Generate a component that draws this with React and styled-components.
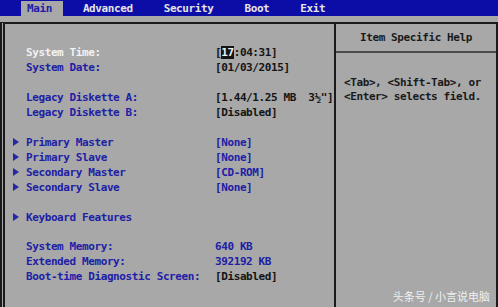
import React from 'react';
import styled, { createGlobalStyle } from 'styled-components';

const LINE = 14.93;

const GlobalStyle = createGlobalStyle`
  html, body {
    margin: 0;
    padding: 0;
    background: #a8a8a8;
  }
  body {
    width: 498px;
    height: 307px;
    overflow: hidden;
  }
`;

const tabs = ['Main', 'Advanced', 'Security', 'Boot', 'Exit'];

const groups = [
  [
    { label: 'System Time:', time: true, selected: true },
    { label: 'System Date:', value: '[01/03/2015]' },
  ],
  [
    { label: 'Legacy Diskette A:', value: '[1.44/1.25 MB  3½"]' },
    { label: 'Legacy Diskette B:', value: '[Disabled]' },
  ],
  [
    { label: 'Primary Master', value: '[None]', sub: true, blue: true },
    { label: 'Primary Slave', value: '[None]', sub: true, blue: true },
    { label: 'Secondary Master', value: '[CD-ROM]', sub: true, blue: true },
    { label: 'Secondary Slave', value: '[None]', sub: true, blue: true },
  ],
  [{ label: 'Keyboard Features', sub: true }],
  [
    { label: 'System Memory:', value: '640 KB', blue: true },
    { label: 'Extended Memory:', value: '392192 KB', blue: true },
    { label: 'Boot-time Diagnostic Screen:', value: '[Disabled]' },
  ],
];

const Arrow = () => (
  <svg width="6" height="8" viewBox="0 0 6 8">
    <path d="M0 0 L6 4 L0 8 Z" fill="#2626a8" />
  </svg>
);

const App = () => {
  return (
    <Screen>
      <GlobalStyle />
      <MenuBar>
        {tabs.map((tab) => (
          <Tab key={tab} active={tab === 'Main'}>
            {tab}
          </Tab>
        ))}
      </MenuBar>

      <Body>
        <Frame>
          <SetupPane>
            {groups.map((group, i) => (
              <Group key={i}>
                {group.map((row) => (
                  <Row key={row.label}>
                    <Marker>{row.sub && <Arrow />}</Marker>
                    <Label selected={row.selected}>{row.label}</Label>
                    {row.time ? (
                      <Value>
                        [<Cursor>17</Cursor>:04:31]
                      </Value>
                    ) : (
                      row.value && <Value blue={row.blue}>{row.value}</Value>
                    )}
                  </Row>
                ))}
              </Group>
            ))}
          </SetupPane>

          <HelpPane>
            <HelpTitle>Item Specific Help</HelpTitle>
            <HelpText>
              <HelpLine>&lt;Tab&gt;, &lt;Shift-Tab&gt;, or</HelpLine>
              <HelpLine>&lt;Enter&gt; selects field.</HelpLine>
            </HelpText>
          </HelpPane>
        </Frame>
      </Body>

      <Watermark>头条号 / 小言说电脑</Watermark>
    </Screen>
  );
};

const Screen = styled.div`
  position: relative;
  width: 498px;
  height: 307px;
  display: flex;
  flex-direction: column;
  background: #a8a8a8;
  font-family: "DejaVu Sans Mono", "Liberation Mono", monospace;
  font-size: 11px;
  font-weight: 700;
  letter-spacing: -0.4px;
  overflow: hidden;
`;

const MenuBar = styled.div`
  height: 16px;
  display: flex;
  align-items: stretch;
  gap: 19px;
  padding-left: 21px;
  background: #0c0ca6;
  flex-shrink: 0;
`;

const Tab = styled.div`
  display: flex;
  align-items: center;
  margin-top: 1px;
  padding: ${({ active }) => (active ? '0 11px 0 6px' : '0 6px')};
  margin-right: ${({ active }) => (active ? '-5px' : '0')};
  background: ${({ active }) => (active ? '#a8a8a8' : 'transparent')};
  color: ${({ active }) => (active ? '#1c1ca6' : '#e4e4e4')};
  white-space: pre;
`;

const Body = styled.div`
  flex: 1;
  padding-top: 6px;
  display: flex;
`;

const Frame = styled.div`
  flex: 1;
  display: grid;
  grid-template-columns: 329px 1fr;
  border-top: 2px solid #1a1a1a;
  border-left: 5px double #1a1a1a;
  border-right: 2px solid #1a1a1a;
`;

const SetupPane = styled.div`
  padding: 21.5px 0 0 8px;
  display: flex;
  flex-direction: column;
  gap: ${LINE}px;
`;

const Group = styled.div`
  display: flex;
  flex-direction: column;
`;

const Row = styled.div`
  height: ${LINE}px;
  display: grid;
  grid-template-columns: 13px 189px 1fr;
  align-items: center;
  white-space: pre;
`;

const Marker = styled.span`
  display: flex;
  align-items: center;
  height: 100%;
`;

const Label = styled.span`
  color: ${({ selected }) => (selected ? '#f2f2f2' : '#2020a6')};
`;

const Value = styled.span`
  color: ${({ blue }) => (blue ? '#2020a6' : '#141414')};
`;

const Cursor = styled.span`
  background: #141414;
  color: #f2f2f2;
`;

const HelpPane = styled.div`
  border-left: 2px solid #1a1a1a;
  display: flex;
  flex-direction: column;
`;

const HelpTitle = styled.div`
  height: 27px;
  display: flex;
  align-items: center;
  justify-content: center;
  color: #1a1a1a;
  border-bottom: 2px solid #4a4a4a;
  white-space: pre;
`;

const HelpText = styled.div`
  padding: 22.5px 0 0 8px;
  display: flex;
  flex-direction: column;
`;

const HelpLine = styled.div`
  height: ${LINE}px;
  line-height: ${LINE}px;
  color: #1a1a1a;
  white-space: pre;
`;

const Watermark = styled.div`
  position: absolute;
  right: 8px;
  bottom: 5px;
  font-family: "Noto Sans CJK SC", "Noto Sans", sans-serif;
  font-size: 11px;
  font-weight: 400;
  letter-spacing: 0;
  line-height: 12px;
  color: rgba(255, 255, 255, 0.85);
`;

export default App;
